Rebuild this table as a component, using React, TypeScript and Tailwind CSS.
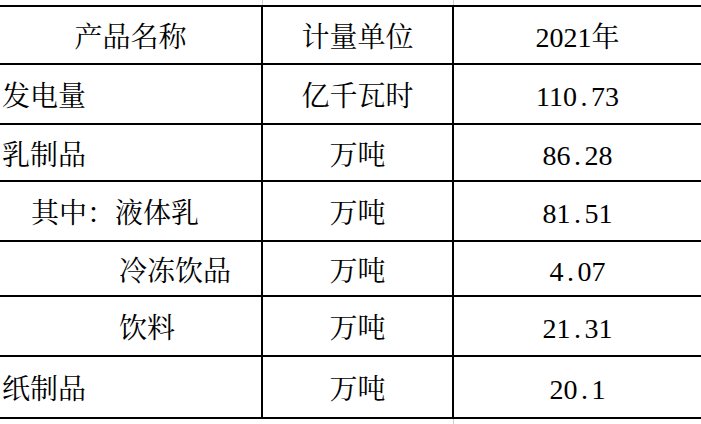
const rows = [
  { name: "发电量", indent: "pl-[2px]", unit: "亿千瓦时", value: "110.73", h: "h-[60px]" },
  { name: "乳制品", indent: "pl-[2px]", unit: "万吨", value: "86.28", h: "h-[57px]" },
  { name: "其中：液体乳", indent: "pl-[31px]", unit: "万吨", value: "81.51", h: "h-[60px]" },
  { name: "冷冻饮品", indent: "pl-[119px]", unit: "万吨", value: "4.07", h: "h-[55px]" },
  { name: "饮料", indent: "pl-[119px]", unit: "万吨", value: "21.31", h: "h-[60px]" },
  { name: "纸制品", indent: "pl-[2px]", unit: "万吨", value: "20.1", h: "h-[62px]" },
];

// SimSun-style digits: period takes a full half-width cell
function Num({ value }: { value: string }) {
  const [a, b] = value.split(".");
  return (
    <span>
      {a}
      {b !== undefined && (
        <>
          <span className="inline-block w-[14px] text-center">.</span>
          {b}
        </>
      )}
    </span>
  );
}

export default function App() {
  return (
    <div
      className="w-[701px] h-[424px] overflow-hidden bg-white text-black text-[28px] leading-none"
      style={{ fontFamily: '"Liberation Serif", "Noto Serif CJK SC", "Noto Sans CJK SC", serif' }}
    >
      {/* gridline strip above the table */}
      <div className="grid grid-cols-[263px_191px_1fr] h-[5px]">
        <div className="border-r border-[#d0d0d0]" />
        <div className="border-r border-[#d0d0d0]" />
        <div />
      </div>

      <div className="border-t-2 border-black">
        {/* Header */}
        <div className="grid grid-cols-[263px_191px_1fr] h-[58px] border-b-2 border-black">
          <div className="flex items-center justify-center pt-[6px] border-r-2 border-black">产品名称</div>
          <div className="flex items-center justify-center pt-[6px] border-r-2 border-black">计量单位</div>
          <div className="flex items-center justify-center pt-[6px]">2021年</div>
        </div>

        {rows.map((r) => (
          <div key={r.name} className={`grid grid-cols-[263px_191px_1fr] ${r.h} border-b-2 border-black`}>
            <div className={`flex items-center pt-[6px] border-r-2 border-black ${r.indent}`}>{r.name}</div>
            <div className="flex items-center justify-center pt-[6px] border-r-2 border-black">{r.unit}</div>
            <div className="flex items-center justify-center pt-[6px]">
              <Num value={r.value} />
            </div>
          </div>
        ))}
      </div>

      {/* gridline strip below */}
      <div className="grid grid-cols-[263px_191px_1fr] h-[5px]">
        <div />
        <div className="border-r border-[#d0d0d0]" />
        <div />
      </div>
    </div>
  );
}
